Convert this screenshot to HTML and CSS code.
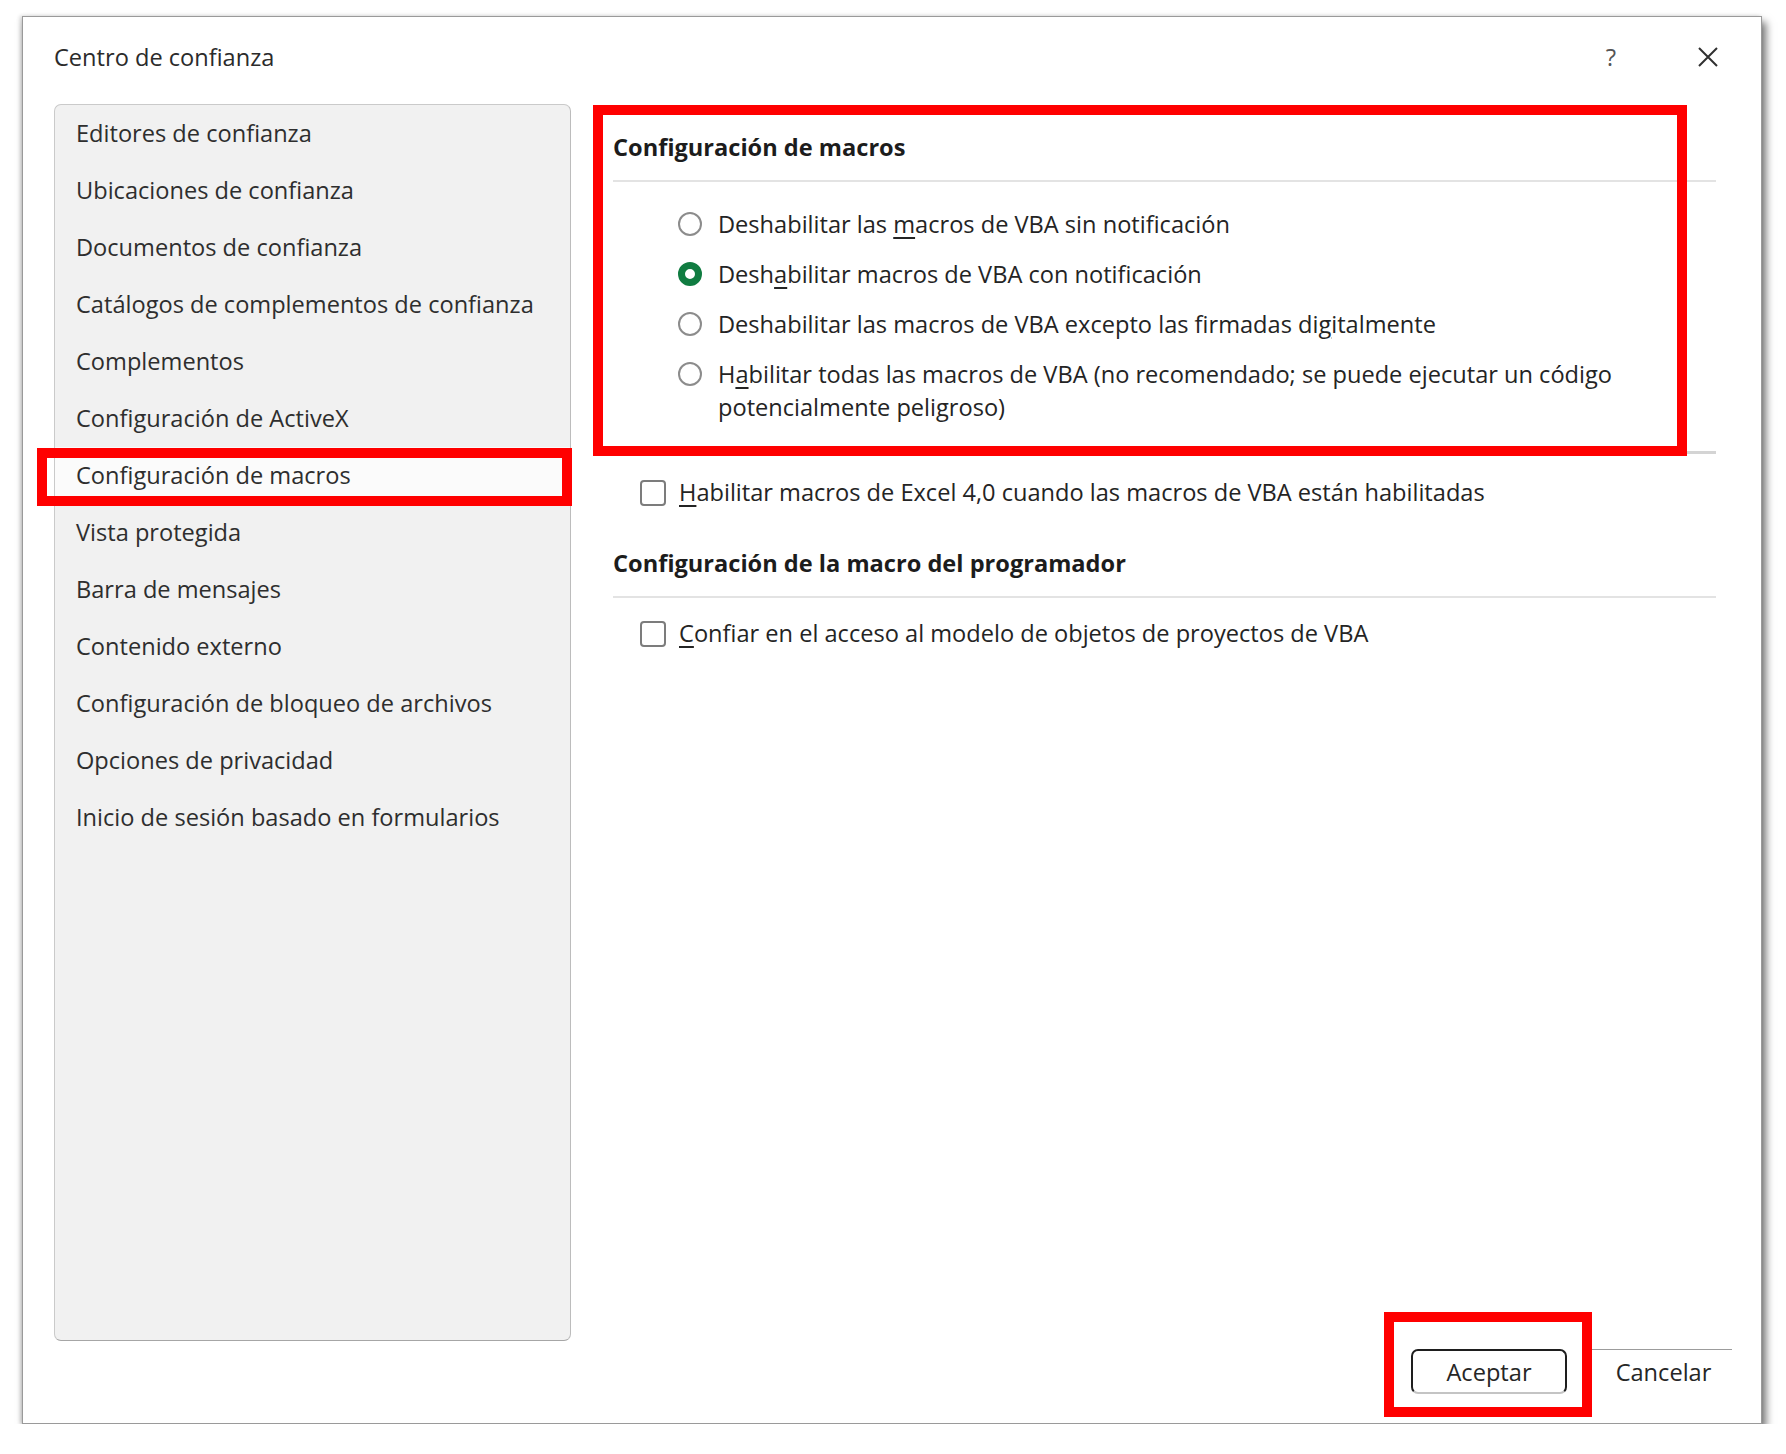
FILE: index.html
```html
<!DOCTYPE html>
<html>
  <head>
    <meta charset="utf-8">
    <title>Centro de confianza</title>
    <link rel="stylesheet" href="styles.css">
  </head>
  <body>
    <div class="dialog">
      <div class="titlebar">
        <div class="title">Centro de confianza</div>
        <div class="help">?</div>
        <div class="close">
          <svg width="22" height="22" viewBox="0 0 22 22"><path d="M2 2L20 20M20 2L2 20" stroke="#303030" stroke-width="2" fill="none"/></svg>
        </div>
      </div>

      <div class="main">
        <ul class="nav">
          <li>Editores de confianza</li>
          <li>Ubicaciones de confianza</li>
          <li>Documentos de confianza</li>
          <li>Catálogos de complementos de confianza</li>
          <li>Complementos</li>
          <li>Configuración de ActiveX</li>
          <li class="selected">Configuración de macros<span class="mark mark-nav"></span></li>
          <li>Vista protegida</li>
          <li>Barra de mensajes</li>
          <li>Contenido externo</li>
          <li>Configuración de bloqueo de archivos</li>
          <li>Opciones de privacidad</li>
          <li>Inicio de sesión basado en formularios</li>
        </ul>

        <div class="content">
          <span class="mark mark-macros"></span>
          <h2 class="section-title">Configuración de macros</h2>
          <div class="rule"></div>
          <div class="radios">
            <div class="option"><span class="radio"></span><span class="label">Deshabilitar las <u>m</u>acros de VBA sin notificación</span></div>
            <div class="option"><span class="radio checked"></span><span class="label">Desh<u>a</u>bilitar macros de VBA con notificación</span></div>
            <div class="option"><span class="radio"></span><span class="label">Deshabilitar las macros de VBA excepto las firmadas di<u>g</u>italmente</span></div>
            <div class="option"><span class="radio"></span><span class="label">H<u>a</u>bilitar todas las macros de VBA (no recomendado; se puede ejecutar un código<br>potencialmente peligroso)</span></div>
          </div>
          <div class="rule rule-group"></div>
          <div class="check check-excel"><span class="box"></span><span class="label"><u>H</u>abilitar macros de Excel 4,0 cuando las macros de VBA están habilitadas</span></div>

          <h2 class="section-title section-dev">Configuración de la macro del programador</h2>
          <div class="rule"></div>
          <div class="check check-vba"><span class="box"></span><span class="label"><u>C</u>onfiar en el acceso al modelo de objetos de proyectos de VBA</span></div>
        </div>
      </div>

      <div class="footer">
        <button class="btn btn-ok">Aceptar<span class="mark mark-ok"></span></button>
        <button class="btn btn-cancel">Cancelar</button>
      </div>
    </div>
  </body>
</html>
```

FILE: styles.css
```css
body {
  margin: 0;
  background: #fff;
  font-family: "Open Sans", "Noto Sans", sans-serif;
  font-size: 23.6px;
  color: #242424;
}
.dialog {
  margin: 16px 0 0 22px;
  width: 1740px;
  height: 1408px;
  box-sizing: border-box;
  border: 1px solid #9a9a9a;
  background: #fff;
  display: flex;
  flex-direction: column;
  box-shadow: 4px 6px 8px rgba(0, 0, 0, 0.55), -2px 0 4px rgba(0, 0, 0, 0.18);
}

/* title bar */
.titlebar {
  height: 87px;
  flex: none;
  display: flex;
  align-items: flex-start;
  padding: 25px 30px 0 31px;
  box-sizing: border-box;
}
.title {
  flex: 1;
  line-height: 30px;
  color: #2b2b2b;
}
.help {
  width: 30px;
  text-align: center;
  line-height: 30px;
  font-size: 24px;
  color: #555;
}
.close {
  width: 46px;
  height: 30px;
  margin-left: 59px;
  display: flex;
  align-items: center;
  justify-content: center;
}

/* body */
.main {
  height: 1237px;
  flex: none;
  display: flex;
  padding-left: 31px;
}
.nav {
  list-style: none;
  margin: 0;
  padding: 0;
  width: 517px;
  box-sizing: border-box;
  background: #f1f1f1;
  border: 1px solid #cacaca;
  border-right-color: #bcbcbc;
  border-bottom-color: #a6a6a6;
  border-radius: 7px;
}
.nav li {
  height: 57px;
  line-height: 57px;
  padding-left: 21px;
  color: #2e2e2e;
  position: relative;
}
.nav li.selected {
  background: #fbfbfb;
}

.content {
  position: relative;
  margin-left: 42px;
  width: 1103px;
}
.section-title {
  margin: 28px 0 0;
  font-size: 23.6px;
  font-weight: 700;
  line-height: 30px;
  color: #1c1c1c;
}
.section-dev {
  margin-top: 39px;
}
.rule {
  height: 2px;
  background: #e3e3e3;
  margin-top: 18px;
}
.rule-group {
  height: 3px;
  background: #d4d4d4;
  margin-top: 27px;
}

.radios {
  padding: 26px 0 0 65px;
}
.option {
  display: flex;
  align-items: flex-start;
  line-height: 33px;
  margin-bottom: 17px;
}
.option:last-child {
  margin-bottom: 0;
}
.radio {
  flex: none;
  width: 24px;
  height: 24px;
  margin-top: 4px;
  margin-right: 16px;
  box-sizing: border-box;
  border: 2px solid #8c8c8c;
  border-radius: 50%;
  background: #fff;
}
.radio.checked {
  border: 7px solid #107c41;
}
u {
  text-decoration-thickness: 1.5px;
  text-underline-offset: 4px;
}

.check {
  display: flex;
  align-items: center;
  line-height: 33px;
  padding-left: 27px;
}
.check-excel {
  margin-top: 22px;
}
.check-vba {
  margin-top: 19px;
}
.box {
  flex: none;
  width: 26px;
  height: 26px;
  margin-right: 13px;
  box-sizing: border-box;
  border: 2px solid #7c7c7c;
  border-radius: 4px;
  background: #fff;
}

/* footer */
.footer {
  flex: 1;
  display: flex;
  justify-content: flex-end;
  align-items: flex-start;
  padding: 8px 29px 0 0;
}
.btn {
  font-family: inherit;
  font-size: 23.6px;
  color: #262626;
  height: 45px;
  background: #fff;
  position: relative;
}
.btn-ok {
  width: 156px;
  border: 2px solid #1e1e1e;
  border-bottom-color: #c4c4c4;
  border-radius: 7px;
}
.btn-cancel {
  width: 140px;
  margin-left: 25px;
  padding-left: 9px;
  border: 0;
  border-top: 1px solid #9c9c9c;
}

/* red annotation boxes */
.mark {
  position: absolute;
  border: 10px solid #ff0000;
  pointer-events: none;
}
.mark-nav {
  left: -18px;
  right: -2px;
  top: 1px;
  bottom: -2px;
}
.mark-macros {
  left: -20px;
  top: 1px;
  width: 1094px;
  height: 351px;
  box-sizing: border-box;
}
.mark-ok {
  left: -29px;
  right: -27px;
  top: -39px;
  bottom: -25px;
}
```
